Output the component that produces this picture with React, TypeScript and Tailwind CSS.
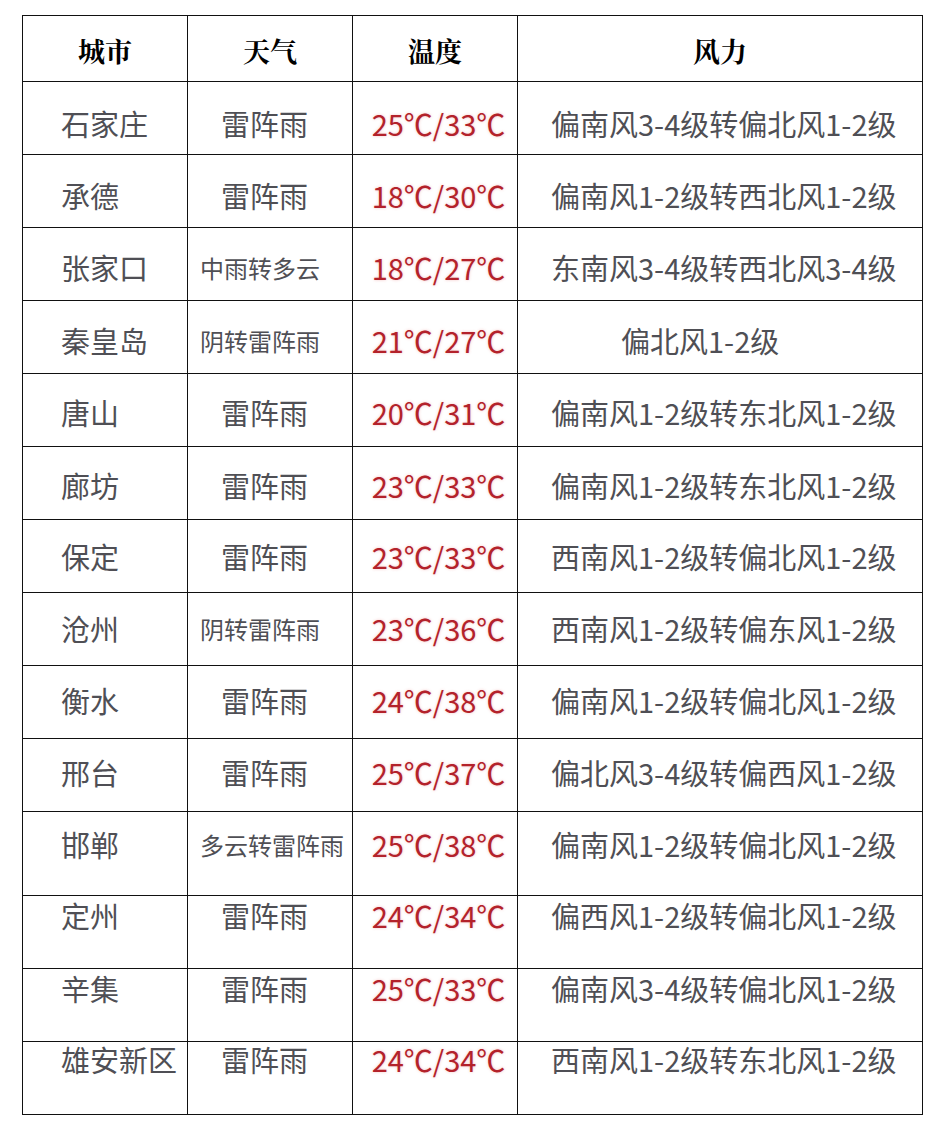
import React from "react";

type Row = {
  city: string;
  weather: string;
  small?: boolean;
  temp: string;
  wind: string;
  short?: boolean;
  h: string;
  pt: string;
};

const rows: Row[] = [
  { city: "石家庄", weather: "雷阵雨", temp: "25℃/33℃", wind: "偏南风3-4级转偏北风1-2级", h: "h-[73px]", pt: "pt-[27px]" },
  { city: "承德", weather: "雷阵雨", temp: "18℃/30℃", wind: "偏南风1-2级转西北风1-2级", h: "h-[73px]", pt: "pt-[26px]" },
  { city: "张家口", weather: "中雨转多云", small: true, temp: "18℃/27℃", wind: "东南风3-4级转西北风3-4级", h: "h-[73px]", pt: "pt-[25px]" },
  { city: "秦皇岛", weather: "阴转雷阵雨", small: true, temp: "21℃/27℃", wind: "偏北风1-2级", short: true, h: "h-[73px]", pt: "pt-[25px]" },
  { city: "唐山", weather: "雷阵雨", temp: "20℃/31℃", wind: "偏南风1-2级转东北风1-2级", h: "h-[73px]", pt: "pt-[24px]" },
  { city: "廊坊", weather: "雷阵雨", temp: "23℃/33℃", wind: "偏南风1-2级转东北风1-2级", h: "h-[73px]", pt: "pt-[24px]" },
  { city: "保定", weather: "雷阵雨", temp: "23℃/33℃", wind: "西南风1-2级转偏北风1-2级", h: "h-[73px]", pt: "pt-[22px]" },
  { city: "沧州", weather: "阴转雷阵雨", small: true, temp: "23℃/36℃", wind: "西南风1-2级转偏东风1-2级", h: "h-[73px]", pt: "pt-[21px]" },
  { city: "衡水", weather: "雷阵雨", temp: "24℃/38℃", wind: "偏南风1-2级转偏北风1-2级", h: "h-[73px]", pt: "pt-[20px]" },
  { city: "邢台", weather: "雷阵雨", temp: "25℃/37℃", wind: "偏北风3-4级转偏西风1-2级", h: "h-[73px]", pt: "pt-[19px]" },
  { city: "邯郸", weather: "多云转雷阵雨", small: true, temp: "25℃/38℃", wind: "偏南风1-2级转偏北风1-2级", h: "h-[84px]", pt: "pt-[18px]" },
  { city: "定州", weather: "雷阵雨", temp: "24℃/34℃", wind: "偏西风1-2级转偏北风1-2级", h: "h-[73px]", pt: "pt-[5px]" },
  { city: "辛集", weather: "雷阵雨", temp: "25℃/33℃", wind: "偏南风3-4级转偏北风1-2级", h: "h-[73px]", pt: "pt-[5px]" },
  { city: "雄安新区", weather: "雷阵雨", temp: "24℃/34℃", wind: "西南风1-2级转东北风1-2级", h: "h-[73px]", pt: "pt-[3px]" },
];

const cell = "border-r border-b border-[#111] whitespace-nowrap";

export default function App() {
  return (
    <div className="min-h-[1146px] w-[938px] bg-white pt-[15px] pl-[22px] font-['Noto_Sans_CJK_SC',sans-serif]">
      <div className="w-[901px] border-l border-t border-[#111]">
        <div className="grid h-[66px] grid-cols-[165px_165px_165px_405px] text-[27px] font-bold leading-[27px] text-black font-['Noto_Serif_CJK_SC','Noto_Sans_CJK_SC',serif]">
          <div className={`${cell} pt-[21px] text-center`}>城市</div>
          <div className={`${cell} pt-[21px] text-center`}>天气</div>
          <div className={`${cell} pt-[21px] text-center`}>温度</div>
          <div className={`${cell} pt-[21px] text-center`}>风力</div>
        </div>

        {rows.map((r) => (
          <div key={r.city} className={`grid grid-cols-[165px_165px_165px_405px] leading-[29px] ${r.h}`}>
            <div className={`${cell} ${r.pt} pl-[38px] text-[29px] text-[#4f4f55]`}>{r.city}</div>
            <div className={`${cell} ${r.pt} text-[#4f4f55]`}>
              {r.small ? (
                <span className="block pl-[12px] text-[24px]">{r.weather}</span>
              ) : (
                <span className="block pl-[33px] text-[29px]">{r.weather}</span>
              )}
            </div>
            <div className={`${cell} ${r.pt} pl-[7px] text-center text-[29px] text-[#b3222b] [text-shadow:0_0_3px_rgba(230,120,120,0.45)]`}>
              {r.temp}
            </div>
            <div className={`${cell} ${r.pt} text-[29px] text-[#4f4f55] ${r.short ? "pl-[103px]" : "pl-[33px]"}`}>
              {r.wind}
            </div>
          </div>
        ))}
      </div>
    </div>
  );
}
